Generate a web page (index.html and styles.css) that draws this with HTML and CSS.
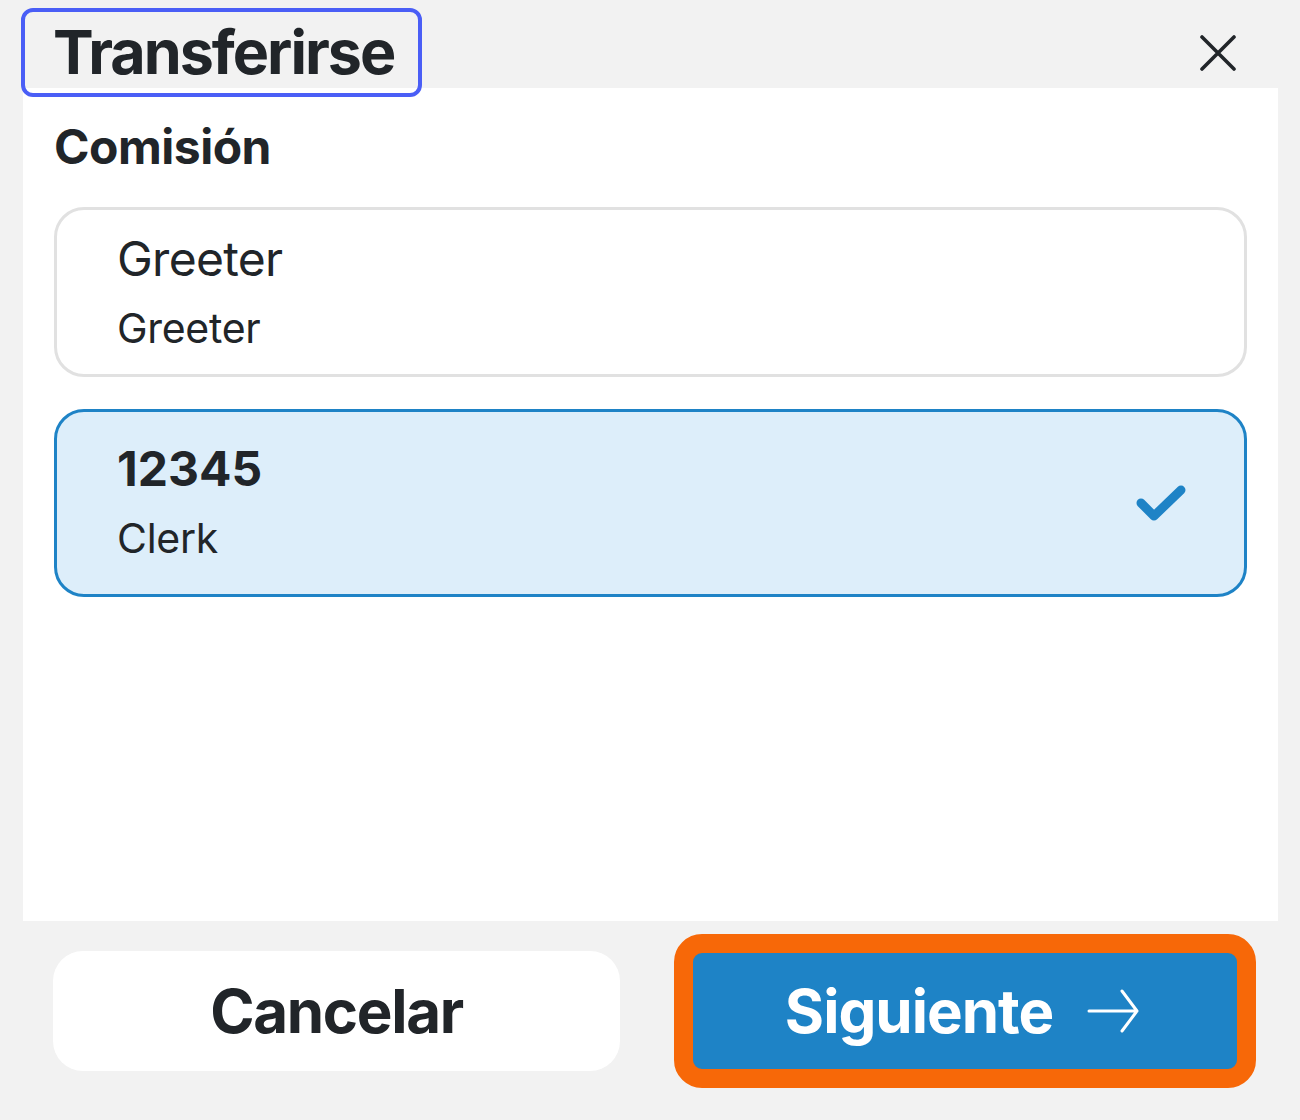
FILE: index.html
```html
<!DOCTYPE html>
<html lang="es">
<head>
<meta charset="utf-8">
<title>Transferirse</title>
<link rel="stylesheet" href="styles.css">
</head>
<body>
<div class="header">
  <h1 class="title">Transferirse</h1>
  <button class="close" aria-label="Cerrar">
    <svg width="36" height="36" viewBox="0 0 36 36"><path d="M2 2 L34 34 M34 2 L2 34" stroke="#212529" stroke-width="3.6" stroke-linecap="round" fill="none"/></svg>
  </button>
</div>
<div class="panel">
  <h2 class="label">Comisión</h2>
  <div class="card">
    <div class="card-text">
      <div class="primary">Greeter</div>
      <div class="secondary">Greeter</div>
    </div>
  </div>
  <div class="card selected">
    <div class="card-text">
      <div class="primary bold">12345</div>
      <div class="secondary">Clerk</div>
    </div>
    <svg class="check" width="52" height="40" viewBox="0 0 52 40"><path d="M6 18 L19 31 L46 5" stroke="#1e83c6" stroke-width="9" stroke-linecap="round" stroke-linejoin="round" fill="none"/></svg>
  </div>
</div>
<div class="footer">
  <button class="btn cancel">Cancelar</button>
  <button class="btn next">
    <span>Siguiente</span>
    <svg width="52" height="44" viewBox="0 0 52 44"><path d="M2 22 L50 22 M35 2 L50 22 L35 42" stroke="#ffffff" stroke-width="3" stroke-linecap="round" stroke-linejoin="round" fill="none"/></svg>
  </button>
</div>
</body>
</html>
```

FILE: styles.css
```css
html, body {
  margin: 0;
  padding: 0;
}
body {
  background: #f2f2f2;
  font-family: Inter, "Liberation Sans", sans-serif;
  color: #212529;
  width: 1300px;
  height: 1120px;
  overflow: hidden;
}
.header {
  position: relative;
  z-index: 1;
  height: 88px;
  display: flex;
  align-items: flex-start;
  justify-content: space-between;
  padding: 8px 0 0 21px;
  box-sizing: border-box;
}
.title {
  margin: 0;
  height: 89px;
  box-sizing: border-box;
  border: 4px solid #4a5ef6;
  border-radius: 12px;
  padding: 0 24px 0 28px;
  font-size: 61px;
  font-weight: 700;
  line-height: 81px;
  letter-spacing: -2px;
}
.close {
  background: none;
  border: 0;
  padding: 0;
  margin: 27px 64px 0 0;
  width: 36px;
  height: 36px;
  display: block;
}
.close svg { display: block; }
.panel {
  background: #ffffff;
  margin: 0 22px 0 23px;
  height: 833px;
  box-sizing: border-box;
  padding: 29px 31px 0 31px;
}
.label {
  margin: 0 0 30px 0;
  font-size: 48px;
  font-weight: 700;
  line-height: 60px;
  letter-spacing: -0.5px;
}
.card {
  border: 3px solid #e1e1e1;
  border-radius: 30px;
  padding: 20px 0 14px 60px;
  display: flex;
  align-items: center;
  justify-content: space-between;
}
.card + .card {
  margin-top: 32px;
}
.card.selected {
  border-color: #1e83c6;
  background: #ddeefa;
  padding-top: 28px;
  padding-bottom: 24px;
  padding-right: 57px;
}
.primary {
  font-size: 48px;
  line-height: 58px;
  letter-spacing: -0.7px;
}
.primary.bold {
  font-weight: 700;
  letter-spacing: 0;
}
.secondary {
  font-size: 41px;
  line-height: 64px;
  margin-top: 8px;
  letter-spacing: -0.3px;
}
.check { display: block; }
.footer {
  display: flex;
  align-items: center;
  padding: 13px 0 0 53px;
  gap: 54px;
}
.btn {
  font-family: Inter, "Liberation Sans", sans-serif;
  font-weight: 700;
  font-size: 60px;
  display: flex;
  align-items: center;
  justify-content: center;
  box-sizing: border-box;
  cursor: pointer;
}
.cancel {
  width: 567px;
  height: 120px;
  background: #ffffff;
  border: 0;
  border-radius: 30px;
  color: #212529;
  letter-spacing: -1.3px;
}
.next {
  width: 582px;
  height: 154px;
  background: #1e83c6;
  border: 19px solid #f76808;
  border-radius: 28px;
  color: #ffffff;
  gap: 34px;
  padding: 0 6px 0 0;
  letter-spacing: -1px;
}
.next svg { display: block; }
```
